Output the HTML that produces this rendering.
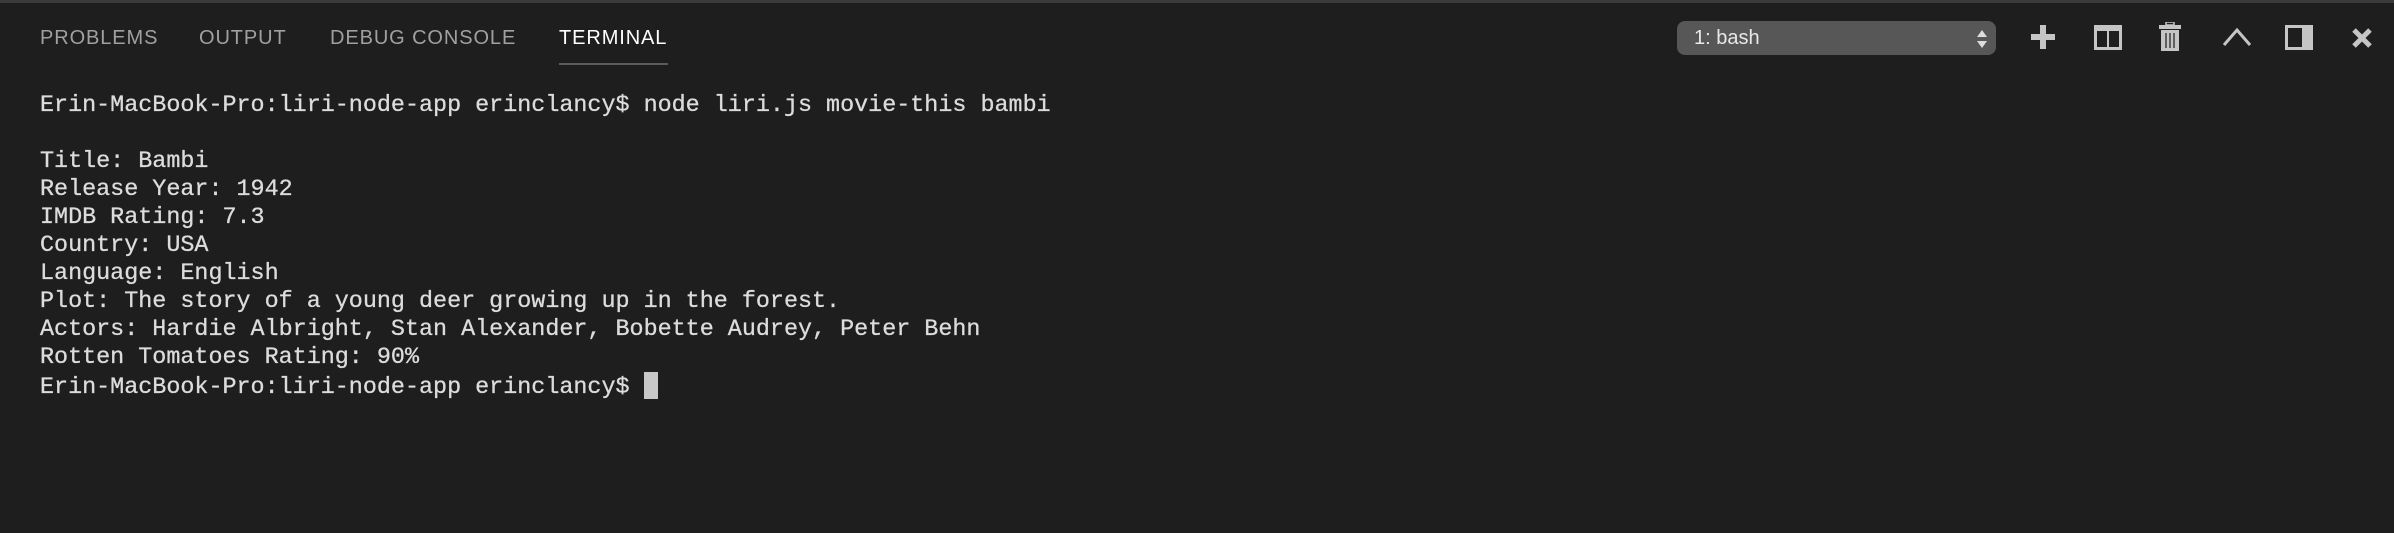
<!DOCTYPE html>
<html><head><style>
html,body{margin:0;padding:0;background:#1e1e1e;width:2394px;height:533px;overflow:hidden}
.top{position:absolute;left:0;top:0;width:2394px;height:3px;background:#3a3a3a}
.tab{position:absolute;top:25px;font-family:"Liberation Sans",sans-serif;font-size:20px;color:#a0a0a0;letter-spacing:0.9px;line-height:26px}
.ul{position:absolute;left:559px;top:63px;width:109px;height:2px;background:#5a5a5a}
.term{position:absolute;left:40px;top:92px;font-family:"Liberation Mono",monospace;font-size:23.4px;line-height:28px;color:#dcdcdc;white-space:pre;-webkit-text-stroke:0.3px #dcdcdc}
.cur{display:inline-block;width:14px;height:27px;background:#c8c8c8;vertical-align:-6px}
.sel{position:absolute;left:1677px;top:21px;width:319px;height:34px;border-radius:8px;background:#575757;font-family:"Liberation Sans",sans-serif;font-size:20px;color:#e8e8e8;line-height:34px}
svg{position:absolute}
</style></head><body>
<div class="top"></div>
<div class="tab" style="left:40px">PROBLEMS</div>
<div class="tab" style="left:199px">OUTPUT</div>
<div class="tab" style="left:330px">DEBUG CONSOLE</div>
<div class="tab" style="left:559px;color:#fff">TERMINAL</div>
<div class="ul"></div>
<div class="sel"><span style="position:absolute;left:17px">1: bash</span>
<svg style="left:299px;top:8px" width="12" height="20" viewBox="0 0 12 20"><path d="M6 1L11 8H1Z M6 19L11 12H1Z" fill="#ddd"/></svg></div>
<svg style="left:2031px;top:25px" width="24" height="24" viewBox="0 0 24 24"><path d="M9 0h6v9h9v6h-9v9H9v-9H0V9h9z" fill="#c5c5c5"/></svg>
<svg style="left:2094px;top:25px" width="28" height="25" viewBox="0 0 28 25"><rect x="1.5" y="1.5" width="25" height="22" fill="none" stroke="#c5c5c5" stroke-width="3"/><rect x="13" y="1" width="2" height="23" fill="#c5c5c5"/><rect x="1" y="1" width="26" height="5" fill="#c5c5c5"/></svg>
<svg style="left:2159px;top:22px" width="22" height="30" viewBox="0 0 22 30"><rect x="7" y="0" width="8" height="3" fill="none" stroke="#c5c5c5" stroke-width="1.5"/><rect x="0" y="3" width="22" height="4" fill="#c5c5c5"/><path d="M2 8h18v21H2z" fill="#c5c5c5"/><path d="M7 11v15M11 11v15M15 11v15" stroke="#1e1e1e" stroke-width="1.2"/></svg>
<svg style="left:2222px;top:27px" width="30" height="20" viewBox="0 0 30 20"><path d="M2 18L15 3L28 18" fill="none" stroke="#c5c5c5" stroke-width="3"/></svg>
<svg style="left:2285px;top:25px" width="28" height="25" viewBox="0 0 28 25"><rect x="1.5" y="1.5" width="25" height="22" fill="none" stroke="#c5c5c5" stroke-width="3"/><rect x="17" y="1" width="10" height="23" fill="#c5c5c5"/></svg>
<svg style="left:2351px;top:27px" width="22" height="22" viewBox="0 0 22 22"><path d="M3 3L19 19M19 3L3 19" stroke="#c5c5c5" stroke-width="5"/></svg>
<div class="term">Erin-MacBook-Pro:liri-node-app erinclancy$ node liri.js movie-this bambi

Title: Bambi
Release Year: 1942
IMDB Rating: 7.3
Country: USA
Language: English
Plot: The story of a young deer growing up in the forest.
Actors: Hardie Albright, Stan Alexander, Bobette Audrey, Peter Behn
Rotten Tomatoes Rating: 90%
Erin-MacBook-Pro:liri-node-app erinclancy$ <span class="cur"></span></div>
</body></html>
